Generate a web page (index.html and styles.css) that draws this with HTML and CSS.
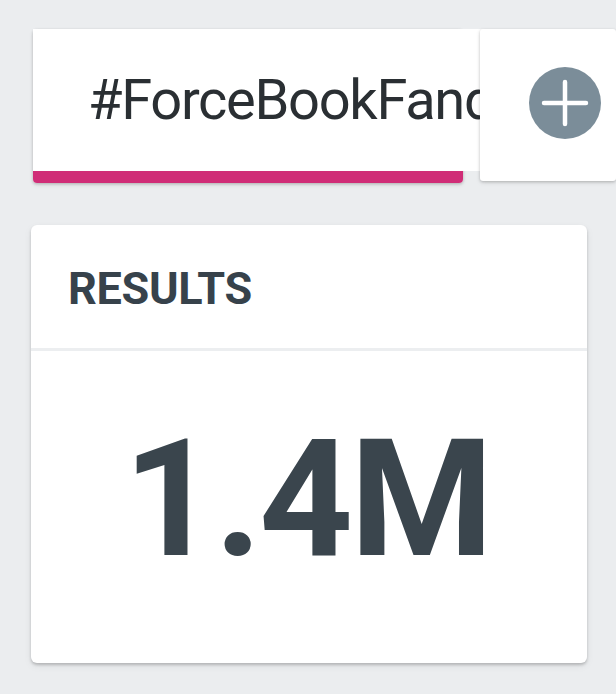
FILE: index.html
```html
<!DOCTYPE html>
<html>
<head>
<meta charset="utf-8">
<link rel="stylesheet" href="styles.css">
</head>
<body>
<div class="page">
  <div class="tabs">
    <div class="tab active">
      <div class="tab-label">#ForceBookFandom</div>
      <div class="tab-bar"></div>
    </div>
    <div class="tab add">
      <svg class="add-icon" width="72" height="72" viewBox="0 0 72 72">
        <circle cx="36" cy="36" r="36" fill="#7b8d99"/>
        <path d="M36 15 V57 M15 36 H57" stroke="#fff" stroke-width="4.5" stroke-linecap="round"/>
      </svg>
    </div>
  </div>
  <div class="card">
    <div class="card-header">RESULTS</div>
    <div class="card-body">
      <div class="metric">1.4M</div>
    </div>
  </div>
</div>
</body>
</html>
```
FILE: styles.css
```css
html, body {
  margin: 0;
  padding: 0;
}
body {
  background: #ebedef;
  font-family: Roboto, "Liberation Sans", sans-serif;
  width: 616px;
  height: 694px;
  overflow: hidden;
}
.page {
  display: flex;
  flex-direction: column;
  padding: 29px 0 0 31px;
}
.tabs {
  display: flex;
  align-items: flex-start;
}
.tab {
  background: #fff;
  border-radius: 4px;
  box-shadow: 0 1px 3px rgba(0,0,0,0.2), 0 2px 5px rgba(0,0,0,0.08);
}
.tab.active {
  margin-left: 2px;
  width: 430px;
  height: 154px;
  display: flex;
  flex-direction: column;
  position: relative;
  overflow: visible;
}
.tab-label {
  flex: 1;
  display: flex;
  align-items: center;
  padding-left: 55px;
  font-size: 56px;
  color: #2a2f33;
  white-space: nowrap;
  width: 460px;
  background: #fff;
  box-sizing: border-box;
  letter-spacing: -1.3px;
}
.tab-bar {
  height: 12px;
  background: #d02d77;
  border-radius: 0 0 4px 4px;
}
.tab.add {
  margin-left: 17px;
  width: 180px;
  height: 152px;
  border-radius: 3px;
  display: flex;
  align-items: center;
  padding-left: 49px;
  box-sizing: border-box;
  position: relative;
  z-index: 1;
}
.add-icon {
  display: block;
  margin-top: -4px;
}
.card {
  margin-top: 42px;
  width: 556px;
  height: 438px;
  background: #fff;
  border-radius: 6px;
  box-shadow: 0 2px 3px rgba(0,0,0,0.2), 0 3px 8px rgba(0,0,0,0.06);
  display: flex;
  flex-direction: column;
  overflow: hidden;
}
.card-header {
  height: 126px;
  border-bottom: 3px solid #eceef0;
  display: flex;
  align-items: center;
  padding-left: 37px;
  padding-top: 3px;
  box-sizing: border-box;
  font-size: 45px;
  font-weight: 700;
  color: #37424b;
  letter-spacing: -0.3px;
}
.card-body {
  flex: 1;
  display: flex;
  justify-content: center;
}
.metric {
  font-size: 164px;
  font-weight: 700;
  color: #3a454d;
  line-height: 1;
  margin-top: 66px;
  letter-spacing: -3px;
  padding-right: 4px;
}
```
